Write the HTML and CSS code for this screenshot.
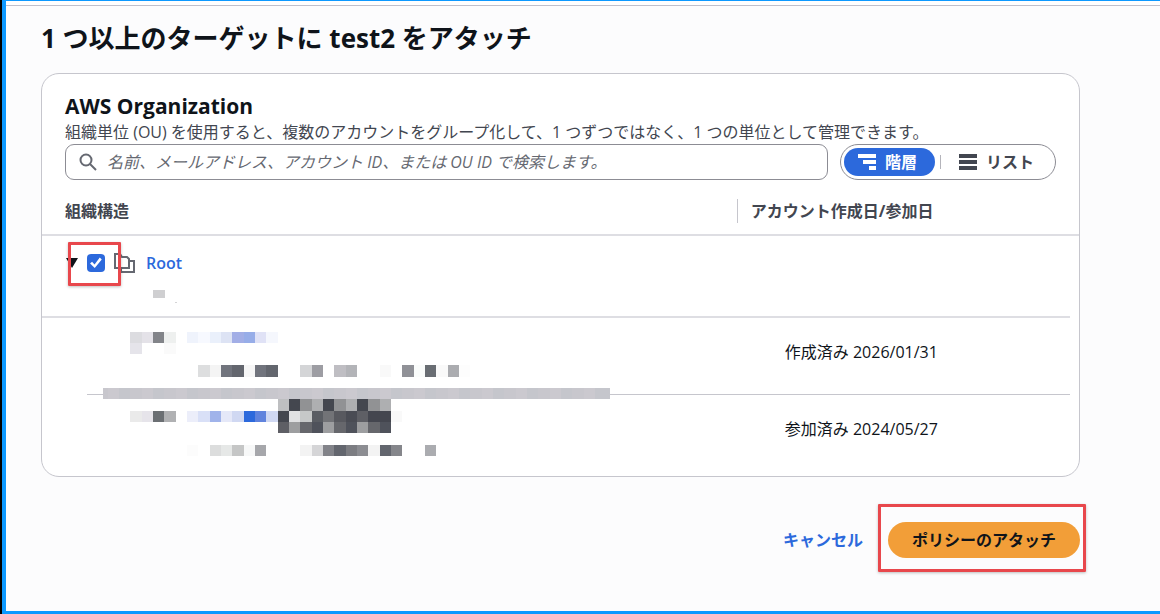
FILE: index.html
```html
<!DOCTYPE html>
<html lang="ja">
<head>
  <meta charset="utf-8">
  <title>ポリシーのアタッチ</title>
  <link rel="stylesheet" href="styles.css">
</head>
<body>
  <main class="page">
    <h1>1 つ以上のターゲットに test2 をアタッチ</h1>

    <section class="card">
      <div class="card-header">
        <h2>AWS Organization</h2>
        <p>組織単位 (OU) を使用すると、複数のアカウントをグループ化して、1 つずつではなく、1 つの単位として管理できます。</p>
        <div class="toolbar">
          <label class="search">
            <svg width="18" height="18" viewBox="0 0 18 18" fill="none" stroke="#656871" stroke-width="2">
              <circle cx="7" cy="7" r="5.5"/>
              <path d="M11 11l6 6"/>
            </svg>
            <input type="text" aria-label="検索" placeholder="名前、メールアドレス、アカウント ID、または OU ID で検索します。">
          </label>
          <div class="views">
            <button type="button" class="view active">
              <svg width="18" height="16" viewBox="0 0 18 16" fill="currentColor">
                <path d="M0 0h18v4H0zM5 6h13v4H5zM11 12h7v4h-7z"/>
              </svg>
              階層
            </button>
            <span class="divider"></span>
            <button type="button" class="view">
              <svg width="18" height="16" viewBox="0 0 18 16" fill="currentColor">
                <path d="M0 0h18v4H0zM0 6h18v4H0zM0 12h18v4H0z"/>
              </svg>
              リスト
            </button>
          </div>
        </div>
      </div>

      <div class="tree">
        <table>
          <thead>
            <tr>
              <th class="name">組織構造</th>
              <th><span>アカウント作成日/参加日</span></th>
            </tr>
          </thead>
          <tbody>
            <tr class="root">
              <td>
                <div class="node">
                  <button type="button" class="caret" aria-label="折りたたむ"></button>
                  <span class="pick">
                    <input type="checkbox" aria-label="Root" checked>
                    <span class="mark"></span>
                  </span>
                  <svg class="folder" width="22" height="20" viewBox="0 0 22 20" fill="none" stroke="#656871" stroke-width="2">
                    <path d="M1 1h5l2 3h5l2 2v9H1z"/>
                    <path d="M15 8h5v11H7v-4"/>
                  </svg>
                  <a href="#">Root</a>
                </div>
              </td>
              <td></td>
            </tr>
            <tr class="account">
              <td></td>
              <td>作成済み 2026/01/31</td>
            </tr>
            <tr class="account">
              <td></td>
              <td>参加済み 2024/05/27</td>
            </tr>
          </tbody>
        </table>
        <svg class="mask" width="520" height="176" viewBox="0 0 520 176"></svg>
      </div>
    </section>

    <div class="actions">
      <a href="#">キャンセル</a>
      <span class="submit">
        <button type="button" class="primary">ポリシーのアタッチ</button>
        <span class="mark"></span>
      </span>
    </div>
  </main>
  <script src="script.js"></script>
</body>
</html>
```
FILE: styles.css
```css
* {
  box-sizing: border-box;
}

body {
  margin: 0;
  min-height: 100vh;
  border: solid #0d99ff;
  border-width: 1px 0 3px 4px;
  box-shadow: inset 0 4px #fff, inset 0 5px #c0c0cc;
  background: #fcfcfd;
  color: #0f141a;
  font: 16px/20px "Open Sans", "Noto Sans CJK JP", sans-serif;
}

html {
  border-left: 2px solid #000;
}

h1,
h2,
p {
  margin: 0;
}

a {
  color: #2c69dc;
  font-weight: 600;
  text-decoration: none;
}

button,
input {
  font: inherit;
}

.page {
  padding: 19px 80px 38px 35px;
}

h1 {
  font-size: 26px;
  line-height: 36px;
}

h2 {
  font-size: 21px;
  line-height: 26px;
}

.card {
  margin-top: 17px;
  border: 1px solid #c6c6cd;
  border-radius: 18px;
  background: #fff;
}

.card-header {
  padding: 19px 23px 0;
}

.card-header p {
  margin-top: 3px;
  color: #424650;
  white-space: nowrap;
}

.toolbar {
  display: flex;
  gap: 12px;
  margin-top: 2px;
}

.search {
  flex: 1;
  display: flex;
  align-items: center;
  gap: 10px;
  height: 36px;
  padding: 0 13px;
  border: 1px solid #8c8c94;
  border-radius: 9px;
}

.search input {
  flex: 1;
  border: 0;
  padding: 0;
  outline: none;
  background: none;
}

.search input::placeholder {
  color: #656871;
  font-style: italic;
}

.views {
  display: flex;
  align-items: center;
  height: 36px;
  padding: 0 3px;
  border: 1px solid #8c8c94;
  border-radius: 18px;
}

.view {
  display: flex;
  align-items: center;
  gap: 9px;
  height: 28px;
  padding: 0 18px;
  border: 0;
  border-radius: 14px;
  background: none;
  color: #424650;
  font-weight: 700;
}

.view.active {
  padding: 0 18px 0 14px;
  background: #2c69dc;
  color: #fff;
}

.divider {
  width: 1px;
  height: 14px;
  margin-left: 5px;
  background: #b4b4bb;
}

.tree {
  position: relative;
}

table {
  width: 100%;
  border-collapse: collapse;
  table-layout: fixed;
}

th {
  height: 55px;
  padding: 7px 0 0;
  border-bottom: 2px solid #dedee3;
  color: #424650;
  text-align: left;
}

th.name {
  width: 67%;
  padding-left: 23px;
}

th span {
  display: block;
  padding: 2px 13px;
  border-left: 1px solid #c6c6cd;
}

td {
  padding: 0;
}

td + td {
  padding-left: 48px;
}

.root {
  height: 83px;
  background: linear-gradient(#dedee3, #dedee3) no-repeat left bottom / calc(100% - 9px) 2px;
}

.account {
  height: 76px;
}

.account td {
  padding-bottom: 8px;
}

.account:last-child {
  height: 82px;
  background: linear-gradient(#c6c6cd, #c6c6cd) no-repeat right 9px top / calc(100% - 54px) 1px;
}

.account:last-child td {
  padding-bottom: 12px;
}

.node {
  display: flex;
  align-items: center;
  padding: 0 0 28px 24px;
}

.caret {
  width: 12px;
  height: 10px;
  padding: 0;
  border: 0;
  background: #0f141a;
  clip-path: polygon(0 0, 100% 0, 50% 100%);
}

.pick {
  position: relative;
  margin-left: 9px;
}

.pick input {
  display: block;
  width: 18px;
  height: 18px;
  margin: 0;
  border-radius: 4px;
  appearance: none;
  background: #2c69dc;
}

.pick input:checked::before {
  content: "";
  display: block;
  height: 18px;
  background: #fff;
  clip-path: polygon(17% 53%, 28% 43%, 42% 58%, 71% 20%, 82% 30%, 43% 78%);
}

.mark {
  position: absolute;
  border: 3px solid #e8474c;
  border-radius: 1px;
  box-shadow: 0 1px 3px rgba(0, 0, 0, 0.25);
  pointer-events: none;
}

.pick .mark {
  inset: -12px -8px -14px -19px;
  width: 53px;
}

.folder {
  margin: 0 10px 0 9px;
}

.mask {
  position: absolute;
  top: 105px;
  left: 54px;
}

.actions {
  display: flex;
  justify-content: flex-end;
  align-items: center;
  gap: 25px;
  margin-top: 45px;
}

.submit {
  position: relative;
}

.submit .mark {
  inset: -18px -6px -14px -10px;
}

.primary {
  display: block;
  height: 36px;
  padding: 0 24px;
  border: 0;
  border-radius: 18px;
  background: #f29e38;
  color: #0f141a;
  font-weight: 700;
}
```
FILE: script.js
```js
// Redacted account names: [row, first column, colours...]
const cell = 11.33;
const left = 34.3;
const top0 = 46.5;
const runs = [
  [0, 0, '#dcdce0', '#e4e2e8', '#828489', '#eef0ef'],
  [0, 5, '#eff3fc', '#f7f9ff', '#eaf0fb', '#dde3f4', '#a2aee6', '#97ade8', '#e0e2f6', '#f5f7fd'],
  [1, 0, '#e5e4ea'],
  [1, 3, '#fafafa'],
  [3, 6, '#dddedf', '#f4f4f4', '#71747d', '#63666e', '#f6f6f6', '#71747d', '#63666e'],
  [3, 15, '#d4d5d7', '#9d9da3'],
  [3, 18, '#bfbec3', '#b3b4b8'],
  [3, 22, '#f9f9f9'],
  [3, 24, '#909197', '#fafcfb', '#696d73', '#f9f9f9', '#abacb0', '#fdfdfd'],
  [6, 13, '#bebfc1', '#44474f', '#919294', '#aeafb1', '#44474f', '#919294', '#aeafb1', '#44474f', '#919294', '#aeafb1'],
  [7, 0, '#eaeaea', '#e6e4ea', '#6b6f73', '#b0b1b3'],
  [7, 5, '#eceefa', '#d9e0f7', '#a0b3ea', '#e5e8f8', '#d0d8f2', '#2c69dc', '#6083dd', '#d0d8f2'],
  [7, 13, '#44474f', '#e0e1e3', '#c6c8c8', '#5a5d63', '#727377', '#58595f', '#4a4c54', '#5e5f65', '#44464f', '#44464f', '#f9f9f9'],
  [8, 13, '#5e5f65', '#9d9ea0', '#66676c', '#4f525b', '#9d9ea0', '#66676c', '#4f525b', '#9d9ea0', '#66676c', '#4f525b'],
  [10, 5, '#fcfcfc'],
  [10, 7, '#dcdddd', '#e6e8e7', '#c5c6c6', '#f7f8f8', '#a6a7ab'],
  [10, 15, '#f3f3f3', '#d5d5d7', '#828389', '#63666e', '#7c7d82', '#8c8d92', '#f3f3f3', '#63666e', '#85868b'],
  [10, 26, '#abacb0']
];

const mask = document.querySelector('.mask');

function addRect(x, y, w, h, fill) {
  const rect = document.createElementNS('http://www.w3.org/2000/svg', 'rect');
  rect.setAttribute('x', Math.round(x));
  rect.setAttribute('y', Math.round(y));
  rect.setAttribute('width', Math.round(x + w) - Math.round(x));
  rect.setAttribute('height', Math.round(y + h) - Math.round(y));
  rect.setAttribute('fill', fill);
  mask.appendChild(rect);
}

runs.forEach(([row, col, ...colors]) => {
  colors.forEach((color, i) => {
    addRect(left + (col + i) * cell, top0 + row * cell, cell, cell, color);
  });
});

// Bar over the row line
const bar = ['#cbc9cf', '#c5c6cc', '#c8c7cd'];
addRect(7, top0 + 5 * cell, 5, cell, bar[2]);
for (let i = -2; i < 42; i++) {
  addRect(left + i * cell, top0 + 5 * cell, cell, cell, bar[(i + 2) % 3]);
}
addRect(510, top0 + 5 * cell, 4, cell, bar[1]);

// Redacted id under Root
addRect(57, 5, 12, 8, '#cfcfd1');
addRect(79, 17, 2, 1, '#d4d4d6');
```
